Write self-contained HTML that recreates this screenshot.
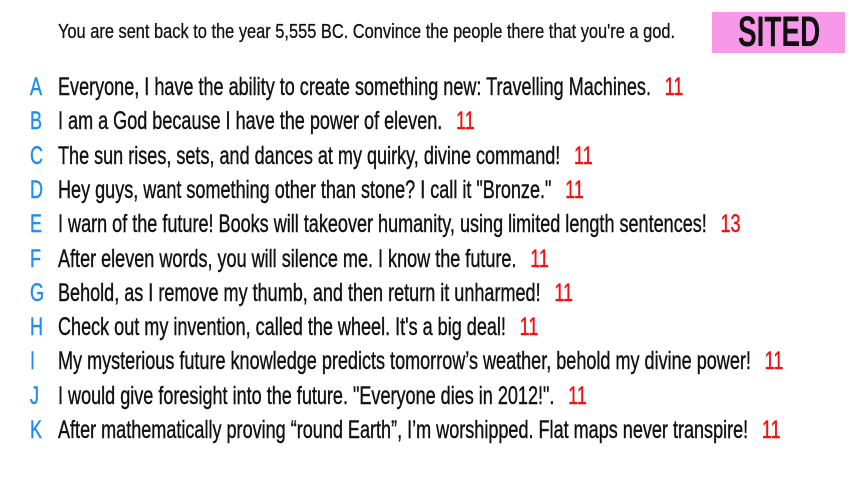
<!DOCTYPE html>
<html><head><style>
body{margin:0;width:853px;height:480px;background:#fff;position:relative;overflow:hidden;font-family:"Liberation Sans",sans-serif;color:#111}
.t{position:absolute;left:58px;top:21px;font-size:20px;white-space:nowrap;transform:scaleX(0.82);transform-origin:0 0;-webkit-text-stroke:0.3px #111}
.box{position:absolute;left:712px;top:12px;width:133px;height:41px;background:#f898e8}
.box span{position:absolute;left:26px;top:-1px;font-size:43px;font-weight:bold;line-height:43px;color:#111;transform:scaleX(0.65);transform-origin:0 0;display:block}
.r{position:absolute;left:0;font-size:25px;white-space:nowrap;height:30px;line-height:30px;width:1200px;-webkit-text-stroke:0.4px currentColor}
.l{position:absolute;left:30px;color:#1e8cf0;transform:scaleX(0.72);transform-origin:0 0}
.x{position:absolute;left:58px;transform:scaleX(0.722);transform-origin:0 0}
.n{color:#f01010;margin-left:19px}
</style></head><body>
<div class="t">You are sent back to the year 5,555 BC. Convince the people there that you're a god.</div>
<div class="box"><span>SITED</span></div>
<div class="r" style="top:72px"><span class="l">A</span><span class="x">Everyone, I have the ability to create something new: Travelling Machines.<span class="n">11</span></span></div>
<div class="r" style="top:106px"><span class="l">B</span><span class="x">I am a God because I have the power of eleven.<span class="n">11</span></span></div>
<div class="r" style="top:141px"><span class="l">C</span><span class="x">The sun rises, sets, and dances at my quirky, divine command!<span class="n">11</span></span></div>
<div class="r" style="top:175px"><span class="l">D</span><span class="x">Hey guys, want something other than stone? I call it "Bronze."<span class="n">11</span></span></div>
<div class="r" style="top:209px"><span class="l">E</span><span class="x">I warn of the future! Books will takeover humanity, using limited length sentences!<span class="n">13</span></span></div>
<div class="r" style="top:244px"><span class="l">F</span><span class="x">After eleven words, you will silence me. I know the future.<span class="n">11</span></span></div>
<div class="r" style="top:278px"><span class="l">G</span><span class="x">Behold, as I remove my thumb, and then return it unharmed!<span class="n">11</span></span></div>
<div class="r" style="top:312px"><span class="l">H</span><span class="x">Check out my invention, called the wheel. It's a big deal!<span class="n">11</span></span></div>
<div class="r" style="top:346px"><span class="l">I</span><span class="x">My mysterious future knowledge predicts tomorrow’s weather, behold my divine power!<span class="n">11</span></span></div>
<div class="r" style="top:381px"><span class="l">J</span><span class="x">I would give foresight into the future. "Everyone dies in 2012!".<span class="n">11</span></span></div>
<div class="r" style="top:415px"><span class="l">K</span><span class="x">After mathematically proving “round Earth”, I’m worshipped. Flat maps never transpire!<span class="n">11</span></span></div>
</body></html>
